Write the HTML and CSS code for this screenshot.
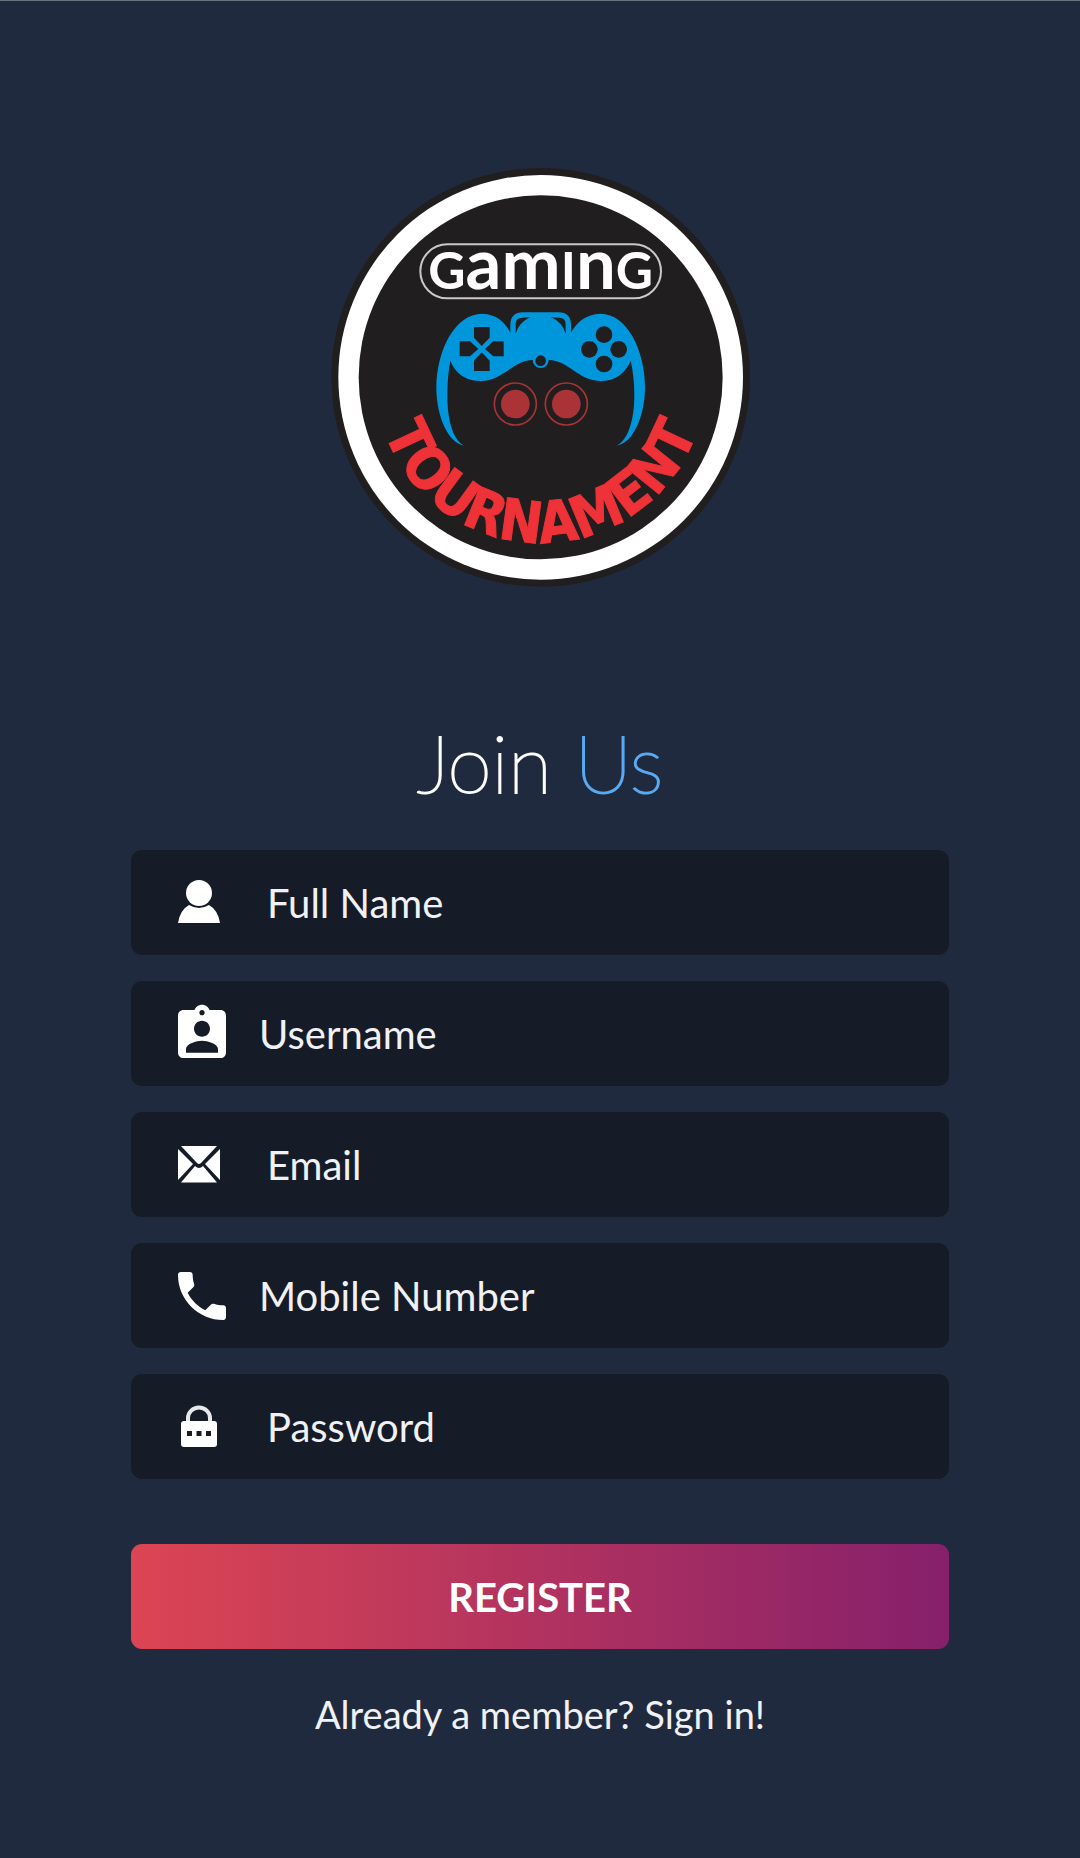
FILE: index.html
```html
<!DOCTYPE html>
<html lang="en">
<head>
<meta charset="utf-8">
<meta name="viewport" content="width=device-width, initial-scale=1">
<title>Join Us</title>
<link rel="stylesheet" href="styles.css">
</head>
<body>
<main class="page">
  <svg class="logo" viewBox="0 0 1320 1320" role="img" aria-label="Gaming Tournament">
    <defs>
      <path id="arc" d="M166 652 A496 496 0 0 0 1158 652"/>
    </defs>
    <circle cx="662" cy="652" r="628" fill="#211e1f"/>
    <circle cx="662" cy="652" r="607" fill="#fff"/>
    <circle cx="662" cy="652" r="546" fill="#211e1f"/>
    <rect x="301" y="253" width="722" height="162" rx="81" fill="none" stroke="#c9c9c9" stroke-width="6"/>
    <text class="logo-top" x="662" y="388" text-anchor="middle"><tspan class="logo-cap">G</tspan>am<tspan class="logo-cap">I</tspan>n<tspan class="logo-cap">G</tspan></text>
    <g fill="#0096dc">
      <path d="M432 857 C385 850 349 770 349 682 C350 570 405 461 487 461 C530 463 555 486 571 518 L571 495 Q571 457 609 457 L715 457 Q753 457 753 495 L753 518 C770 486 797 463 842 461 C920 461 975 570 975 682 C975 770 938 850 891 857 C925 838 943 780 943 705 Q943 650 932 602 C916 640 885 663 842 663 C775 663 745 600 686 600 A24 24 0 0 1 638 600 C579 600 550 663 482 663 C438 663 405 640 391 602 Q382 650 382 705 C382 780 398 838 432 857Z"/>
    </g>
    <g fill="#211e1f">
      <path d="M587 521 L587 492 Q587 473 607 473 L632 471 Q597 486 587 521Z"/>
      <path d="M737 521 L737 492 Q737 473 717 473 L692 471 Q727 486 737 521Z"/>
      <path d="M462 501 H509 V533 L485 558 L462 533Z"/>
      <path d="M462 633 H509 V602 L485 577 L462 602Z"/>
      <path d="M419 544 H450 L475 567 L450 589 H419Z"/>
      <path d="M551 544 H520 L495 567 L520 589 H551Z"/>
      <circle cx="852" cy="524" r="25"/>
      <circle cx="808" cy="568" r="25"/>
      <circle cx="896" cy="568" r="25"/>
      <circle cx="852" cy="612" r="25"/>
      <circle cx="662" cy="602" r="16"/>
    </g>
    <g fill="#a93336">
      <circle cx="586" cy="732" r="43"/>
      <circle cx="739" cy="732" r="43"/>
      <circle cx="586" cy="732" r="63" fill="none" stroke="#a93336" stroke-width="5"/>
      <circle cx="739" cy="732" r="63" fill="none" stroke="#a93336" stroke-width="5"/>
    </g>
    <text class="logo-arc"><textPath href="#arc" startOffset="50%" text-anchor="middle">TOURNAMENT</textPath></text>
  </svg>

  <h1 class="title">Join <span class="title-accent">Us</span></h1>

  <form class="form">
    <label class="field">
      <svg class="icon icon-wide" viewBox="0 0 72 64" aria-hidden="true"><circle cx="29" cy="22" r="13"/><path d="M8 52 Q10 39 19 34 Q29 40 39 34 Q48 39 50 52Z"/></svg>
      <input class="input" type="text" placeholder="Full Name" aria-label="Full Name">
    </label>
    <label class="field">
      <svg class="icon" viewBox="0 0 24 24" aria-hidden="true"><path d="M19 3h-4.180C14.400 1.840 13.300 1 12 1c-1.300 0-2.400.84-2.820 2H5c-1.100 0-2 .9-2 2v14c0 1.100.9 2 2 2h14c1.100 0 2-.9 2-2V5c0-1.100-.9-2-2-2zm-7 0c.55 0 1 .45 1 1s-.45 1-1 1-1-.45-1-1 .45-1 1-1zm0 4c1.660 0 3 1.340 3 3s-1.340 3-3 3-3-1.340-3-3 1.340-3 3-3zm6 12H6v-1.400c0-2 4-3.100 6-3.100s6 1.100 6 3.100V19z"/></svg>
      <input class="input" type="text" placeholder="Username" aria-label="Username">
    </label>
    <label class="field">
      <svg class="icon icon-wide" viewBox="0 0 72 64" aria-hidden="true"><path d="M11 13H47L31 30Q29 32 27 30Z"/><path d="M8 16L23 31L8 47Z"/><path d="M50 16L35 31L50 47Z"/><path d="M11 49.500L25 33Q29 37 33 33L47 49.500Z"/></svg>
      <input class="input" type="email" placeholder="Email" aria-label="Email">
    </label>
    <label class="field">
      <svg class="icon" viewBox="0 0 24 24" aria-hidden="true"><path d="M6.620 10.790c1.440 2.830 3.760 5.140 6.590 6.590l2.200-2.200c.27-.27.67-.36 1.020-.24 1.120.37 2.330.57 3.570.57.55 0 1 .45 1 1V20c0 .55-.45 1-1 1-9.390 0-17-7.610-17-17 0-.55.45-1 1-1h3.500c.55 0 1 .45 1 1 0 1.250.2 2.450.57 3.570.11.35.03.74-.25 1.020l-2.200 2.200z"/></svg>
      <input class="input" type="tel" placeholder="Mobile Number" aria-label="Mobile Number">
    </label>
    <label class="field">
      <svg class="icon icon-wide" viewBox="0 0 72 64" aria-hidden="true"><path d="M18 26V23A11 10.500 0 0 1 40 23V26" fill="none" stroke="#e8e8ec" stroke-width="4"/><path fill-rule="evenodd" d="M14 26H44Q47 26 47 29V49Q47 52 44 52H14Q11 52 11 49V29Q11 26 14 26ZM17 36V41H22V36ZM26.500 36V41H31.500V36ZM36 36V41H41V36Z"/></svg>
      <input class="input" type="password" placeholder="Password" aria-label="Password">
    </label>
    <button class="submit" type="submit">REGISTER</button>
  </form>

  <a class="signin" href="#signin">Already a member? Sign in!</a>
</main>
</body>
</html>
```
FILE: styles.css
```css
* {
  box-sizing: border-box;
}

body {
  margin: 0;
  min-height: 100vh;
  background: #202a3e;
  border-top: 1px solid #67727e;
  color: #f0f1f5;
  font-family: Lato, "Noto Sans", sans-serif;
}

.page {
  display: flex;
  flex-direction: column;
  align-items: center;
  width: 76%;
  max-width: 818px;
  margin: 0 auto;
  padding: 159px 0 112px;
}

.logo {
  width: 440px;
  max-width: 100%;
}

.logo-top {
  fill: #fff;
  font-size: 212px;
  font-weight: 700;
}

.logo-cap {
  font-size: 154px;
}

.logo-arc {
  fill: #ee3237;
  stroke: #ee3237;
  stroke-width: 3px;
  font-family: "Liberation Sans Narrow", "DejaVu Sans Condensed", sans-serif;
  font-size: 172px;
  font-weight: 700;
}

.title {
  margin: 112px 0 38px;
  color: #fff;
  font-size: 80px;
  font-weight: 200;
  line-height: 100px;
  -webkit-text-stroke: 2px currentColor;
}

.title-accent {
  color: #58aaf2;
}

.form {
  display: flex;
  flex-direction: column;
  gap: 26px;
  width: 100%;
}

.field {
  display: flex;
  align-items: center;
  height: 105px;
  padding: 0 39px;
  border-radius: 11px;
  background: #161b28;
}

.icon {
  flex: none;
  width: 64px;
  height: 64px;
  margin-right: 25px;
  fill: #fff;
}

.icon-wide {
  width: 72px;
}

.input {
  flex: 1;
  min-width: 0;
  padding: 0;
  border: 0;
  outline: 0;
  background: none;
  color: inherit;
  font: inherit;
  font-size: 40px;
  line-height: 48px;
}

.input::placeholder {
  color: #f0f1f5;
  opacity: 1;
}

.submit {
  height: 105px;
  margin-top: 39px;
  border: 0;
  border-radius: 11px;
  background: linear-gradient(90deg, #dc4553, #86206b);
  color: #fff;
  font: inherit;
  font-size: 40px;
  font-weight: 700;
}

.signin {
  margin-top: 41px;
  color: inherit;
  font-size: 38px;
  line-height: 48px;
  text-decoration: none;
}
```
